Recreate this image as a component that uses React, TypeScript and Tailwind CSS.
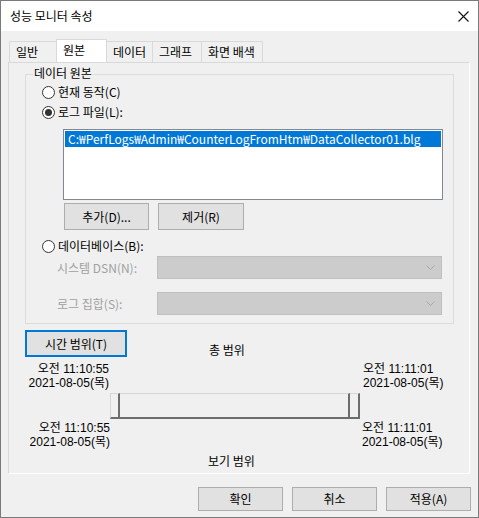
import React from 'react';

const font = { fontFamily: '"Noto Sans CJK KR", "Noto Sans", sans-serif' };

const Radio = ({ checked, label, disabled }: { checked?: boolean; label: string; disabled?: boolean }) => (
    <div className="flex items-center h-[16px] ml-[16px]">
        <span className="w-[13px] h-[13px] rounded-full border border-[#333333] bg-white flex items-center justify-center">
            {checked && <span className="w-[7px] h-[7px] rounded-full bg-[#333333]"></span>}
        </span>
        <span className={`ml-[3px] text-[12px] leading-[16px] ${disabled ? 'text-[#a0a0a0]' : 'text-black'}`}>{label}</span>
    </div>
);

const Button = ({ label, className = '' }: { label: string; className?: string }) => (
    <button className={`flex items-center justify-center bg-[#e1e1e1] border border-[#adadad] text-[12px] text-black ${className}`}>
        {label}
    </button>
);

const Combo = () => (
    <div className="w-[285px] h-[23px] bg-[#cccccc] border border-[#bfbfbf] flex items-center justify-end pr-[6px]">
        <svg width="9" height="5" viewBox="0 0 9 5">
            <path d="M0.5 0.5 L4.5 4.5 L8.5 0.5" fill="none" stroke="#a8a8a8" strokeWidth="1" />
        </svg>
    </div>
);

const Tab = ({ label, w, selected }: { label: string; w: string; selected?: boolean }) => (
    <div
        className={
            selected
                ? `${w} h-[24px] -mb-px bg-white border border-b-0 border-[#d9d9d9] pl-[6px] text-[12px] leading-[20px] z-10`
                : `${w} h-[21px] bg-[#f0f0f0] border border-b-0 border-[#d9d9d9] pl-[6px] text-[12px] leading-[19px] -ml-px`
        }
    >
        {label}
    </div>
);

// two-line time stamp under/over the range slider
const Stamp = ({ time, right }: { time: string; right?: boolean }) => (
    <p
        className={`font-['Liberation_Sans','Noto_Sans_CJK_KR',sans-serif] text-[12px] leading-[14px] whitespace-nowrap ${right ? 'text-left' : 'text-right'}`}
    >
        {time}
        <br />
        2021-08-05(목)
    </p>
);

export default function App() {
    return (
        <div className="w-[479px] h-[518px] bg-[#f0f0f0] border border-[#7a7a7a] flex flex-col text-black overflow-hidden" style={font}>
            <div className="h-[30px] bg-white flex items-center justify-between pl-[9px] pr-[9px]">
                <span className="text-[12px] leading-[16px]">성능 모니터 속성</span>
                <svg width="11" height="11" viewBox="0 0 11 11">
                    <path d="M0.5 0.5 L10.5 10.5 M10.5 0.5 L0.5 10.5" stroke="#111" strokeWidth="1.1" />
                </svg>
            </div>

            <div className="flex items-end ml-[9px] mt-[8px] h-[23px]">
                <Tab label="일반" w="w-[48px]" />
                <div className="-ml-px">
                    <Tab label="원본" w="w-[51px]" selected />
                </div>
                <Tab label="데이터" w="w-[47px]" />
                <Tab label="그래프" w="w-[50px]" />
                <Tab label="화면 배색" w="w-[62px]" />
            </div>

            <div className="ml-[7px] w-[462px] h-[412px] border border-[#d9d9d9] border-r-white border-b-white flex flex-col">
                <div className="ml-[16px] mt-[11px] w-[429px] h-[250px] border border-[#dcdcdc] flex flex-col">
                    <span className="-mt-[10px] ml-[7px] px-[1px] w-fit bg-[#f0f0f0] text-[12px] leading-[16px]">데이터 원본</span>
                    <div className="mt-[3px]">
                        <Radio label="현재 동작(C)" />
                    </div>
                    <div className="mt-[4px]">
                        <Radio label="로그 파일(L):" checked />
                    </div>
                    <div className="mt-[9px] ml-[37px] w-[380px] h-[71px] bg-white border border-[#828790] p-px">
                        <div className="h-[16px] bg-[#0078d7] text-white text-[12px] leading-[16px] pl-[3px] whitespace-nowrap">
                            C:₩PerfLogs₩Admin₩CounterLogFromHtm₩DataCollector01.blg
                        </div>
                    </div>
                    <div className="mt-[3px] ml-[38px] flex gap-[9px]">
                        <Button label="추가(D)..." className="w-[85px] h-[27px]" />
                        <Button label="제거(R)" className="w-[86px] h-[27px]" />
                    </div>
                    <div className="mt-[8px]">
                        <Radio label="데이터베이스(B):" />
                    </div>
                    <div className="mt-[2px] flex items-center">
                        <span className="ml-[31px] w-[100px] text-[12px] leading-[16px] text-[#a0a0a0]">시스템 DSN(N):</span>
                        <Combo />
                    </div>
                    <div className="mt-[13px] flex items-center">
                        <span className="ml-[31px] w-[100px] text-[12px] leading-[16px] text-[#a0a0a0]">로그 집합(S):</span>
                        <Combo />
                    </div>
                </div>

                <div className="flex items-start mt-[6px] ml-[16px]">
                    <button className="w-[102px] h-[27px] bg-[#e1e1e1] border-2 border-[#0078d7] text-[12px] flex items-center justify-center">
                        시간 범위(T)
                    </button>
                    <span className="ml-[82px] mt-[12px] text-[12px] leading-[16px]">총 범위</span>
                </div>

                <div className="mt-[4px] grid grid-cols-[101px_250px_1fr]">
                    <div className="pr-[1px]">
                        <Stamp time="오전 11:10:55" />
                    </div>
                    <div></div>
                    <div className="pl-[3px]">
                        <Stamp time="오전 11:11:01" right />
                    </div>

                    <div></div>
                    <div className="mt-[3px] h-[26px] flex">
                        <div className="w-[10px] h-full bg-[#f0f0f0] border border-[#d6d6d6] border-r-2 border-r-[#6d6d6d] border-b-2 border-b-[#6d6d6d]"></div>
                        <div className="flex-1 h-full bg-[#f0f0f0] border-t border-[#d6d6d6] border-r-2 border-r-[#6d6d6d] border-b-2 border-b-[#6d6d6d]"></div>
                        <div className="w-[10px] h-full bg-[#f0f0f0] border-t border-[#d6d6d6] border-r-2 border-r-[#6d6d6d] border-b-2 border-b-[#6d6d6d]"></div>
                    </div>
                    <div></div>

                    <div className="mt-[2px]">
                        <Stamp time="오전 11:10:55" />
                    </div>
                    <div></div>
                    <div className="mt-[2px] pl-[2px]">
                        <Stamp time="오전 11:11:01" right />
                    </div>
                </div>

                <span className="mt-[4px] ml-[199px] text-[12px] leading-[16px]">보기 범위</span>
            </div>

            <div className="mt-[13px] flex justify-end gap-[9px] pr-[7px]">
                <Button label="확인" className="w-[85px] h-[24px]" />
                <Button label="취소" className="w-[85px] h-[24px]" />
                <Button label="적용(A)" className="w-[85px] h-[24px]" />
            </div>
        </div>
    );
}
